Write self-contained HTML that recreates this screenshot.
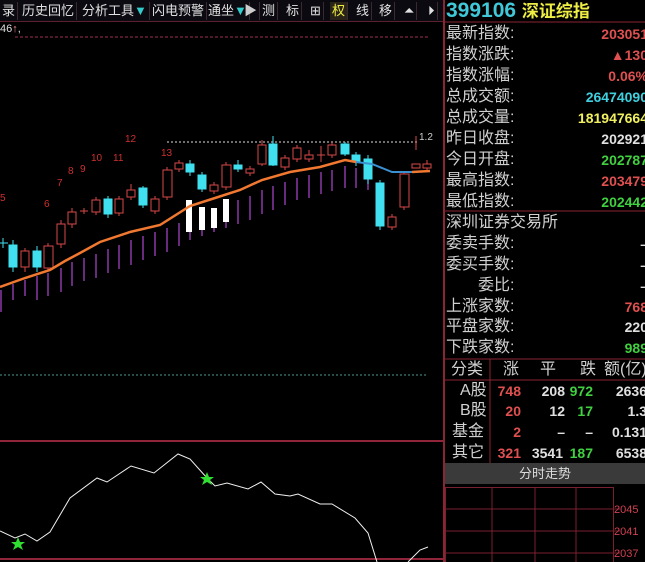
<!DOCTYPE html>
<html><head><meta charset="utf-8"><style>
*{margin:0;padding:0;box-sizing:border-box}
body{width:645px;height:562px;background:#000;overflow:hidden;position:relative;font-family:"Liberation Sans","Noto Sans CJK SC",sans-serif}
.tb{position:absolute;left:0;top:0;width:443px;height:22px;background:#0b0a10;border-bottom:1px solid #5a2030}
.tb span{position:absolute;top:2px;height:18px;font-size:13px;color:#e0e0e0;line-height:18px;border-right:1px solid #3a2a30;padding:0 2px}
.r{position:absolute;left:446px;font-size:16px;color:#d0d0d0;line-height:20px;white-space:nowrap}
.v{position:absolute;right:-3px;font-size:14px;font-weight:bold;line-height:20px;text-align:right;white-space:nowrap}
.t{position:absolute;font-size:14px;font-weight:bold;line-height:20px;text-align:right;white-space:nowrap}
</style></head><body>
<div class="tb">
<span style="left:0">录</span>
<span style="left:20px">历史回忆</span>
<span style="left:80px">分析工具<b style="color:#3cc">▼</b></span>
<span style="left:150px">闪电预警</span>
<span style="left:206px">通坐<b style="color:#3cc">▼</b></span>
<span style="left:242px;color:#ccc">▶</span>
<span style="left:260px">测</span>
<span style="left:284px">标</span>
<span style="left:308px">⊞</span>
<span style="left:330px;color:#ee4;background:#2a2418">权</span>
<span style="left:354px">线</span>
<span style="left:377px">移</span>
<span style="left:402px">⏶</span>
<span style="left:426px">⏵</span>
</div>
<div style="position:absolute;left:0;top:23px;font-size:11px;color:#ddd">46<span style="color:#e88">↑</span>,</div>
<svg style="position:absolute;left:0;top:0" width="645" height="562">
<line x1="15" y1="37" x2="430" y2="37" stroke="#a03050" stroke-dasharray="3,2"/>
<line x1="0" y1="375" x2="428" y2="375" stroke="#4a9a8a" stroke-dasharray="2,2"/>
<line x1="167" y1="142" x2="418" y2="142" stroke="#ddd" stroke-dasharray="2,2"/>
<text x="419" y="140" fill="#ccc" font-size="10" font-family="Liberation Sans">1.2</text>
<line x1="0" y1="441" x2="443" y2="441" stroke="#c0304a" stroke-width="1.5"/>
<line x1="0" y1="559" x2="443" y2="559" stroke="#c0304a" stroke-width="1.5"/>
<line x1="444" y1="0" x2="444" y2="562" stroke="#8a2535" stroke-width="2"/>
<g fill="#d03030" font-size="10" font-family="Liberation Sans">
<text x="0" y="201">5</text><text x="44" y="207">6</text><text x="57" y="186">7</text><text x="68" y="174">8</text><text x="80" y="172">9</text><text x="91" y="161">10</text><text x="113" y="161">11</text><text x="125" y="142">12</text><text x="161" y="156">13</text>
</g>
<g stroke="#a040c0" stroke-width="1.3">
<path d="M1 290V312M13 284V300M25 280V296M37 276V300M48 273V296M61 268V292M72 262V286M84 258V281M96 254V278M108 249V273M119 245V269M131 240V265M143 236V260M155 232V256M167 228V252M179 223V246M190 218V240M202 214V236M214 210V232M226 205V228M238 200V224M250 196V220M262 190V214M273 186V210M285 182V205M297 178V200M309 175V198M321 172V194M332 170V191M345 166V188M356 168V188M368 172V190"/>
</g>
<g fill="none" stroke="#d84848" stroke-width="1">
<path d="M25 248V272M48 243V270M61 220V248M72 208V228M84 208V214M96 197V215M119 196V216M131 184V200M155 196V214M167 167V200M179 160V172M214 182V194M226 162V190M250 166V176M262 140V166M285 155V170M297 145V162M309 150V162M321 146V162M332 142V158M392 214V230M404 171V210M416 136V150M427 160V170"/>
<rect x="21" y="251" width="8" height="16" fill="#000"/><rect x="44" y="246" width="9" height="22" fill="#000"/><rect x="57" y="224" width="8" height="20" fill="#000"/><rect x="68" y="212" width="8" height="12" fill="#000"/><line x1="80" y1="211" x2="88" y2="211"/><rect x="92" y="200" width="8" height="12" fill="#000"/><rect x="115" y="199" width="8" height="14" fill="#000"/><rect x="127" y="190" width="8" height="7" fill="#000"/><rect x="151" y="199" width="8" height="12" fill="#000"/><rect x="163" y="170" width="9" height="27" fill="#000"/><rect x="175" y="163" width="8" height="6" fill="#000"/><rect x="210" y="185" width="8" height="6" fill="#000"/><rect x="222" y="165" width="9" height="22" fill="#000"/><rect x="246" y="169" width="8" height="4" fill="#000"/><rect x="258" y="145" width="8" height="19" fill="#000"/><rect x="281" y="158" width="8" height="9" fill="#000"/><rect x="293" y="148" width="8" height="11" fill="#000"/><rect x="305" y="155" width="8" height="4" fill="#000"/><line x1="317" y1="155" x2="325" y2="155"/><rect x="328" y="145" width="8" height="10" fill="#000"/><rect x="388" y="217" width="8" height="10" fill="#000"/><rect x="400" y="174" width="9" height="33" fill="#000"/><rect x="412" y="164" width="8" height="4" fill="#000"/><rect x="423" y="164" width="8" height="4" fill="#000"/>
</g>
<g fill="#40e0f0" stroke="#40e0f0">
<path d="M3 238V248M0 243H8M13 240V272M37 246V272M108 196V218M143 186V208M190 160V176M202 172V192M238 160V172M273 136V166M345 142V156M356 152V166M368 155V184M380 180V230" stroke-width="1"/>
<rect x="9" y="245" width="8" height="22"/><rect x="33" y="251" width="8" height="16"/><rect x="104" y="199" width="8" height="15"/><rect x="139" y="188" width="8" height="17"/><rect x="186" y="164" width="8" height="8"/><rect x="198" y="175" width="8" height="14"/><rect x="234" y="165" width="8" height="4"/><rect x="269" y="144" width="8" height="21"/><rect x="341" y="144" width="8" height="10"/><rect x="352" y="155" width="8" height="7"/><rect x="364" y="159" width="8" height="20"/><rect x="376" y="183" width="8" height="43"/>
</g>
<g fill="#fff"><rect x="186" y="200" width="6" height="32"/><rect x="199" y="207" width="6" height="23"/><rect x="211" y="208" width="6" height="20"/><rect x="223" y="199" width="6" height="23"/></g>
<path d="M0 287L25 278L50 270L65 261L80 253L100 242L130 232L160 225L190 206L215 198L240 190L262 180L290 172L320 167L345 160L356 162" fill="none" stroke="#f07830" stroke-width="2.5"/>
<path d="M356 162L372 164L392 172L412 172" fill="none" stroke="#3a90d0" stroke-width="2"/>
<path d="M412 172L430 171" fill="none" stroke="#f07830" stroke-width="2.5"/>
<path d="M0 531L15 538L25 534L37 541L50 532L70 498L97 478L107 482L131 466L154 473L178 454L190 459L207 478L215 486L227 483L248 489L261 482L275 494L290 496L298 494L320 504L332 504L355 518L368 533L377 562M408 562L420 550L428 547" fill="none" stroke="#f0f0f0" stroke-width="1"/>
<g fill="#30e030"><polygon points="18,537 20,542 25,542 21,545 23,550 18,547 13,550 15,545 11,542 16,542"/><polygon points="207,472 209,477 214,477 210,480 212,485 207,482 202,485 204,480 200,477 205,477"/></g>
<line x1="444" y1="22" x2="645" y2="22" stroke="#8a2535"/>
<line x1="444" y1="211" x2="645" y2="211" stroke="#8a2535"/>
<line x1="444" y1="359" x2="645" y2="359" stroke="#8a2535"/>
<line x1="444" y1="380" x2="645" y2="380" stroke="#8a2535"/>
<line x1="490" y1="359" x2="490" y2="463" stroke="#8a2535"/>
<rect x="445" y="463" width="200" height="21" fill="#3a3a3a"/>
<g stroke="#7a2030" fill="none"><rect x="445.5" y="487.5" width="168" height="80"/><path d="M492 487V562M535 487V562M576 487V562M445 509H620M445 531H620M445 553H620"/></g>
<g fill="#d04050" font-size="11" font-family="Liberation Sans"><text x="614" y="513">2045</text><text x="614" y="535">2041</text><text x="614" y="557">2037</text></g>
</svg>
<div style="position:absolute;left:446px;top:-1px;font-size:21px;font-weight:bold;color:#40c8d8;line-height:24px">399106 <span style="color:#ee4;font-size:17px">深证综指</span></div>
<div class="r" style="top:24px">最新指数:</div><div class="v" style="top:24px;color:#e05050">203051</div>
<div class="r" style="top:45px">指数涨跌:</div><div class="v" style="top:45px;color:#e05050">▲130</div>
<div class="r" style="top:66px">指数涨幅:</div><div class="v" style="top:66px;color:#e05050">0.06%</div>
<div class="r" style="top:87px">总成交额:</div><div class="v" style="top:87px;color:#40d0e0">26474090</div>
<div class="r" style="top:108px">总成交量:</div><div class="v" style="top:108px;color:#f0f060">181947664</div>
<div class="r" style="top:129px">昨日收盘:</div><div class="v" style="top:129px;color:#e0e0e0">202921</div>
<div class="r" style="top:150px">今日开盘:</div><div class="v" style="top:150px;color:#40d040">202787</div>
<div class="r" style="top:171px">最高指数:</div><div class="v" style="top:171px;color:#e05050">203479</div>
<div class="r" style="top:192px">最低指数:</div><div class="v" style="top:192px;color:#40d040">202442</div>
<div class="r" style="top:213px">深圳证券交易所</div>
<div class="r" style="top:234px">委卖手数:</div><div class="v" style="top:234px;color:#ddd">–</div>
<div class="r" style="top:255px">委买手数:</div><div class="v" style="top:255px;color:#ddd">–</div>
<div class="r" style="top:276px;left:478px">委比:</div><div class="v" style="top:276px;color:#ddd">–</div>
<div class="r" style="top:297px">上涨家数:</div><div class="v" style="top:297px;color:#e05050">768</div>
<div class="r" style="top:317px">平盘家数:</div><div class="v" style="top:317px;color:#e0e0e0">220</div>
<div class="r" style="top:338px">下跌家数:</div><div class="v" style="top:338px;color:#40d040">989</div>
<div class="r" style="top:360px;left:451px">分类</div>
<div class="r" style="top:360px;left:503px">涨</div><div class="r" style="top:360px;left:540px">平</div><div class="r" style="top:360px;left:580px">跌</div><div class="r" style="top:360px;left:604px">额(亿)</div>
<div class="r" style="top:381px;left:460px">A股</div><div class="r" style="top:401px;left:460px">B股</div><div class="r" style="top:422px;left:452px">基金</div><div class="r" style="top:443px;left:452px">其它</div>
<div class="t" style="top:381px;right:124px;color:#e05050">748</div><div class="t" style="top:381px;right:80px;color:#e0e0e0">208</div><div class="t" style="top:381px;right:52px;color:#40d040">972</div><div class="t" style="top:381px;right:-2px;color:#e0e0e0">2636</div>
<div class="t" style="top:401px;right:124px;color:#e05050">20</div><div class="t" style="top:401px;right:80px;color:#e0e0e0">12</div><div class="t" style="top:401px;right:52px;color:#40d040">17</div><div class="t" style="top:401px;right:-2px;color:#e0e0e0">1.3</div>
<div class="t" style="top:422px;right:124px;color:#e05050">2</div><div class="t" style="top:422px;right:80px;color:#e0e0e0">–</div><div class="t" style="top:422px;right:52px;color:#e0e0e0">–</div><div class="t" style="top:422px;right:-2px;color:#e0e0e0">0.131</div>
<div class="t" style="top:443px;right:124px;color:#e05050">321</div><div class="t" style="top:443px;right:82px;color:#e0e0e0">3541</div><div class="t" style="top:443px;right:52px;color:#40d040">187</div><div class="t" style="top:443px;right:-2px;color:#e0e0e0">6538</div>
<div style="position:absolute;left:445px;top:464px;width:200px;text-align:center;font-size:13px;color:#ddd;line-height:20px">分时走势</div>
</body></html>
